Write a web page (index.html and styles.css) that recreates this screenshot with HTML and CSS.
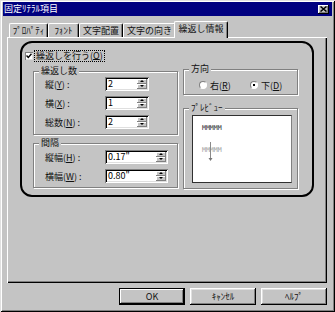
FILE: index.html
```html
<!DOCTYPE html>
<html lang="ja">
<head>
<meta charset="utf-8">
<title>固定ﾘﾃﾗﾙ項目</title>
<link rel="stylesheet" href="styles.css">
</head>
<body>
<div class="dialog">
  <div class="titlebar">
    <span class="title">固定ﾘﾃﾗﾙ項目</span>
    <span class="close"><svg width="7" height="6" viewBox="0 0 7 6"><path d="M0.5 0.5 L6.5 5.5 M6.5 0.5 L0.5 5.5" stroke="#000" stroke-width="1.5"/></svg></span>
  </div>
  <div class="content">
    <div class="tabs">
      <div class="tab w1">ﾌﾟﾛﾊﾟﾃｨ</div>
      <div class="tab w2">ﾌｫﾝﾄ</div>
      <div class="tab w3">文字配置</div>
      <div class="tab w4">文字の向き</div>
      <div class="tab active">繰返し情報</div>
    </div>
    <div class="panel">
      <div class="highlight">
        <div class="checkrow">
          <span class="checkbox"><svg width="6" height="6" viewBox="0 0 6 6"><path d="M0.5 2.5 L2.3 4.5 L5.5 0.8" fill="none" stroke="#000" stroke-width="1.4"/></svg></span>
          <span class="focus">繰返しを行う(<u>O</u>)</span>
        </div>
        <div class="columns">
          <div class="col-left">
            <div class="group g-count">
              <span class="legend">繰返し数</span>
              <div class="field"><span class="flabel">縦(<u>Y</u>) :</span><span class="spinbox"><span class="value">2</span><span class="spin"><i class="up"></i><i class="down"></i></span></span></div>
              <div class="field"><span class="flabel">横(<u>X</u>) :</span><span class="spinbox"><span class="value">1</span><span class="spin"><i class="up"></i><i class="down"></i></span></span></div>
              <div class="field"><span class="flabel">総数(<u>N</u>) :</span><span class="spinbox"><span class="value">2</span><span class="spin"><i class="up"></i><i class="down"></i></span></span></div>
            </div>
            <div class="group g-gap">
              <span class="legend">間隔</span>
              <div class="field"><span class="flabel">縦幅(<u>H</u>) :</span><span class="spinbox wide"><span class="value">0.17&quot;</span><span class="spin"><i class="up"></i><i class="down"></i></span></span></div>
              <div class="field"><span class="flabel">横幅(<u>W</u>) :</span><span class="spinbox wide"><span class="value">0.80&quot;</span><span class="spin"><i class="up"></i><i class="down"></i></span></span></div>
            </div>
          </div>
          <div class="col-right">
            <div class="group g-dir">
              <span class="legend">方向</span>
              <span class="radio-item r1"><span class="radio"></span>右(<u>R</u>)</span>
              <span class="radio-item"><span class="radio checked"></span>下(<u>D</u>)</span>
            </div>
            <div class="group g-preview">
              <span class="legend">ﾌﾟﾚﾋﾞｭｰ</span>
              <div class="preview">
                <svg width="98" height="66" viewBox="0 0 98 66">
                  <text x="9" y="14" class="pv-text">MMMMM</text>
                  <text x="9" y="36" class="pv-text pv-ghost">MMMMM</text>
                  <line x1="17.5" y1="26" x2="17.5" y2="42" stroke="#8a8a8a" stroke-width="1"/>
                  <path d="M15.5 42 L19.5 42 L17.5 45 Z" fill="#777"/>
                </svg>
              </div>
            </div>
          </div>
        </div>
      </div>
    </div>
    <div class="buttons">
      <div class="btn default">OK</div>
      <div class="btn">ｷｬﾝｾﾙ</div>
      <div class="btn">ﾍﾙﾌﾟ</div>
    </div>
  </div>
</div>
</body>
</html>
```
FILE: styles.css
```css
* { box-sizing: border-box; }
html, body { margin: 0; padding: 0; }
body {
  background: #c4c4c4;
  font-family: "Noto Sans CJK JP", "Noto Sans", sans-serif;
  font-size: 9px;
  color: #111;
}
u { text-decoration: underline; text-underline-offset: 1px; }

.dialog {
  width: 335px;
  height: 312px;
  padding: 2px 3px 0 3px;
  background: #c4c4c4;
  box-shadow: inset 1px 1px 0 #e0e0e0, inset -1px -1px 0 #000,
              inset 2px 2px 0 #fff, inset -2px -2px 0 #808080;
}

.titlebar {
  height: 14px;
  background: #000080;
  color: #fff;
  display: flex;
  align-items: center;
  justify-content: space-between;
  padding: 0 3px 0 1px;
  line-height: 14px;
}
.close {
  width: 11px;
  height: 9px;
  background: #c4c4c4;
  display: flex;
  align-items: center;
  justify-content: center;
  box-shadow: inset -1px -1px 0 #000, inset 1px 1px 0 #fff, inset -2px -2px 0 #808080;
}

.content { padding: 5px 5px 0 4px; }

.tabs {
  display: flex;
  align-items: flex-end;
  height: 16px;
  padding-left: 2px;
}
.tab {
  height: 14px;
  border: 1px solid;
  border-color: #fff #000 transparent #fff;
  border-bottom: 0;
  border-radius: 2px 2px 0 0;
  box-shadow: inset -1px 0 0 #808080;
  text-align: center;
  line-height: 13px;
  white-space: nowrap;
}
.w1 { width: 39px; }
.w2 { width: 31px; }
.w3 { width: 44px; }
.w4 { width: 53px; }
.tab.active {
  width: 54px;
  height: 17px;
  margin: 0 -2px -1px;
  position: relative;
  z-index: 1;
  background: #c4c4c4;
  line-height: 14px;
}

.panel {
  height: 246px;
  padding: 4px 0 0 13px;
  box-shadow: inset 1px 1px 0 #fff, inset -1px -1px 0 #000, inset -2px -2px 0 #808080;
}

.highlight {
  width: 294px;
  height: 156px;
  border: 2px solid #000;
  border-radius: 12px;
  padding: 7px 14px 0 3px;
}

.checkrow {
  display: flex;
  align-items: center;
  height: 12px;
}
.checkbox {
  width: 8px;
  height: 8px;
  background: #fff;
  box-shadow: inset 1px 1px 0 #808080, inset -1px -1px 0 #e0e0e0;
  display: flex;
  align-items: center;
  justify-content: center;
  margin-right: 1px;
}
.focus {
  border: 1px dotted #000;
  padding: 0 1px;
  line-height: 10px;
  height: 12px;
}
.focus u { text-underline-offset: 0; }

.columns {
  display: flex;
  gap: 5px;
  margin-top: 9px;
  padding-left: 8px;
}
.col-left { width: 145px; }
.col-right { width: 115px; margin-top: -2px; }

.group {
  position: relative;
  border: 1px solid #808080;
  box-shadow: inset 1px 1px 0 #fff, 1px 1px 0 #fff;
}
.legend {
  position: absolute;
  top: -6px;
  left: 5px;
  padding: 0 2px;
  background: #c4c4c4;
  line-height: 10px;
  white-space: nowrap;
}

.g-count {
  height: 64px;
  padding: 5px 0 0 11px;
  display: flex;
  flex-direction: column;
  gap: 5px;
}
.g-gap {
  margin-top: 8px;
  height: 45px;
  padding: 6px 0 0 11px;
  display: flex;
  flex-direction: column;
  gap: 5px;
}
.field {
  display: flex;
  align-items: center;
  height: 14px;
}
.flabel { width: 60px; white-space: nowrap; }

.spinbox {
  display: flex;
  width: 44px;
  height: 14px;
  padding: 2px;
  background: #fff;
  box-shadow: inset 1px 1px 0 #808080, inset -1px -1px 0 #fff,
              inset 2px 2px 0 #000, inset -2px -2px 0 #dfdfdf;
}
.spinbox.wide { width: 63px; }
.value {
  flex: 1;
  line-height: 10px;
  padding-left: 1px;
  color: #000;
}
.spin {
  display: flex;
  flex-direction: column;
  width: 10px;
}
.spin i {
  flex: 1;
  position: relative;
  background: #c4c4c4;
  box-shadow: inset -1px -1px 0 #808080, inset 1px 1px 0 #fff;
}
.spin i::after {
  content: "";
  position: absolute;
  left: 3px;
  top: 1px;
  border-left: 2px solid transparent;
  border-right: 2px solid transparent;
}
.spin i.up::after { border-bottom: 2px solid #000; }
.spin i.down::after { border-top: 2px solid #000; }

.g-dir {
  height: 26px;
  padding: 9px 0 0 15px;
  display: flex;
  align-items: flex-start;
}
.radio-item {
  display: flex;
  align-items: center;
  height: 12px;
  white-space: nowrap;
}
.radio-item.r1 { width: 51px; }
.radio {
  width: 8px;
  height: 8px;
  border-radius: 50%;
  border: 1px solid;
  border-color: #808080 #fff #fff #808080;
  background: #fff;
  margin-right: 3px;
  display: flex;
  align-items: center;
  justify-content: center;
}
.radio.checked::after {
  content: "";
  width: 2px;
  height: 2px;
  background: #000;
}

.g-preview {
  margin-top: 13px;
  height: 81px;
  padding: 6px 0 0 8px;
}
.preview {
  width: 100px;
  height: 68px;
  background: #fff;
  border: 1px solid #303030;
  border-color: #303030 #808080 #303030 #303030;
}
.preview svg { display: block; }
.pv-text {
  font-family: "DejaVu Sans Mono", monospace;
  font-size: 6.5px;
  fill: #222;
}
.pv-ghost { fill: #9a9a9a; }

.buttons {
  display: flex;
  justify-content: flex-end;
  gap: 5px;
  margin-top: 5px;
}
.btn {
  width: 66px;
  height: 17px;
  display: flex;
  align-items: center;
  justify-content: center;
  box-shadow: inset -1px -1px 0 #000, inset 1px 1px 0 #fff,
              inset -2px -2px 0 #808080, inset 2px 2px 0 #dfdfdf;
}
.btn.default {
  border: 1px solid #000;
  box-shadow: inset -1px -1px 0 #000, inset 1px 1px 0 #fff, inset -2px -2px 0 #808080;
}
```
